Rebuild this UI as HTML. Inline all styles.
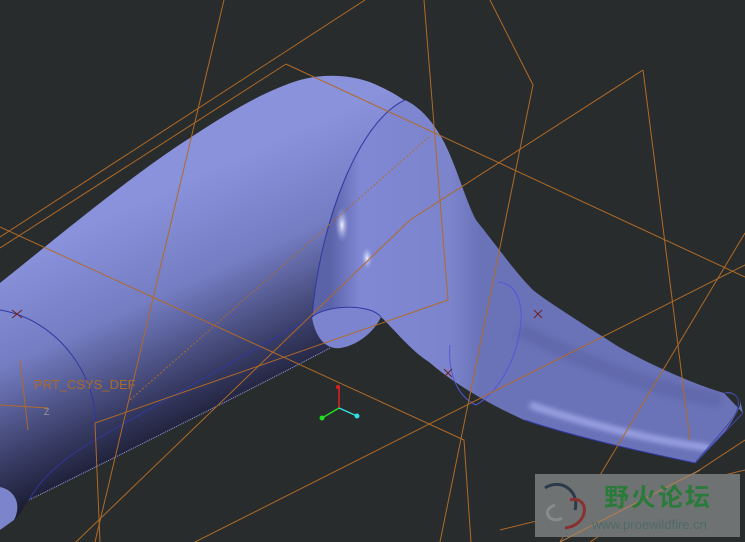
<!DOCTYPE html>
<html><head><meta charset="utf-8"><style>
html,body{margin:0;padding:0;background:#282c2c;width:745px;height:542px;overflow:hidden}
svg{display:block}
</style></head><body>
<svg width="745" height="542" viewBox="0 0 745 542" xmlns="http://www.w3.org/2000/svg">
<defs>
<linearGradient id="g" x1="140" y1="200" x2="240" y2="420" gradientUnits="userSpaceOnUse">
<stop offset="0" stop-color="#8a92dc"/><stop offset="0.4" stop-color="#747cc2"/><stop offset="0.75" stop-color="#3a3e68"/><stop offset="1" stop-color="#16182a"/>
</linearGradient>
<linearGradient id="n" x1="330" y1="200" x2="480" y2="200" gradientUnits="userSpaceOnUse">
<stop offset="0" stop-color="#5a62a8"/><stop offset="0.2" stop-color="#8088d4"/><stop offset="0.8" stop-color="#7c84cc"/><stop offset="1" stop-color="#6a72b8"/>
</linearGradient>
<radialGradient id="h" cx="0" cy="0" r="1" gradientTransform="translate(342 225) scale(7 18)" gradientUnits="userSpaceOnUse">
<stop offset="0" stop-color="#f0f2ff"/><stop offset="1" stop-color="#9098e0" stop-opacity="0"/>
</radialGradient>
<radialGradient id="h2" cx="0" cy="0" r="1" gradientTransform="translate(367 258) scale(6 12)" gradientUnits="userSpaceOnUse">
<stop offset="0" stop-color="#e8ecff"/><stop offset="1" stop-color="#9098e0" stop-opacity="0"/>
</radialGradient>
<filter id="b" x="-10%" y="-50%" width="120%" height="200%"><feGaussianBlur stdDeviation="3"/></filter>
<clipPath id="c"><path d="M405,100 C360,120 320,220 312,317 L381,317 C395,330 410,350 429,362 C450,380 480,400 524,420 C570,435 619,447 695,463 L743,413 L740,400 C735,392 728,391 724,393 C700,386 660,370 619,347 C580,322 545,300 533,290 C515,272 500,250 476,220 C465,200 455,160 440,135 C430,118 418,106 405,100 Z"/></clipPath>
</defs>
<rect width="745" height="542" fill="#282c2c"/>
<path d="M0,283 C60,235 120,185 176,147 C220,118 260,92 300,80 C330,72 360,76 381,87 C405,98 425,115 440,135 C455,160 465,200 476,220 L400,330 L381,317 L330,348 C250,390 150,440 29,500 C25,505 20,515 14,520 L0,530 Z" fill="url(#g)"/>
<path d="M405,100 C360,120 320,220 312,317 L381,317 C395,330 410,350 429,362 C450,380 480,400 524,420 C570,435 619,447 695,463 L743,413 L740,400 C735,392 728,391 724,393 C700,386 660,370 619,347 C580,322 545,300 533,290 C515,272 500,250 476,220 C465,200 455,160 440,135 C430,118 418,106 405,100 Z" fill="url(#n)"/>
<g clip-path="url(#c)">
<path d="M530,405 C590,425 650,440 710,448" fill="none" stroke="#b4baf8" stroke-width="6" filter="url(#b)" opacity="0.8"/>
<path d="M520,330 C580,360 650,390 720,400" fill="none" stroke="#5a60a0" stroke-width="14" filter="url(#b)" opacity="0.5"/>
</g>
<path d="M724,393 C735,392 742,398 740,405 C735,420 720,440 695,463 L743,413 Z" fill="#282c2c"/>
<path d="M724,393 C738,392 742,400 735,415 C725,430 705,450 695,463" fill="none" stroke="#4048a8"/>
<line x1="743" y1="413" x2="695" y2="463" stroke="#4048a8"/>
<path d="M524,420 C570,435 619,447 695,463" fill="none" stroke="#3038a0"/>
<ellipse cx="342" cy="225" rx="7" ry="18" fill="url(#h)"/>
<ellipse cx="367" cy="258" rx="6" ry="12" fill="url(#h2)"/>
<path d="M312,317 C320,305 370,303 381,317 C370,340 345,350 334,348 C320,345 314,330 312,317 Z" fill="#7c84d0"/>
<path d="M312,317 C325,305 370,303 381,317" fill="none" stroke="#3038a0"/>
<path d="M0,487 C15,490 22,505 14,520 L0,530 Z" fill="#7c84cc"/>
<path d="M405,100 C360,120 320,220 312,317" fill="none" stroke="#3038a0" stroke-width="1"/>
<path d="M0,310 C60,320 100,380 95,430" fill="none" stroke="#3038a0"/>
<path d="M330,348 C250,390 150,440 29,500" fill="none" stroke="#9aa0e0" stroke-dasharray="1 1"/>
<path d="M312,317 L95,440 C60,460 40,480 29,500" fill="none" stroke="#3038a0"/>
<path d="M498,282 C540,285 520,380 476,405 C455,395 448,370 450,345" fill="none" stroke="#5058d8"/>
<g stroke="#b06a28" stroke-width="1" fill="none">
<line x1="0" y1="237" x2="365" y2="0"/>
<line x1="0" y1="248" x2="286" y2="64"/>
<line x1="286" y1="64" x2="745" y2="277"/>
<polyline points="0,227 464,440 471,542"/>
<line x1="224" y1="0" x2="95" y2="542"/>
<polyline points="424,0 448,300 95,423 100,542"/>
<polyline points="490,0 533,85 440,542"/>
<polyline points="643,70 690,440"/>
<polyline points="643,70 410,220 76,542"/>
<line x1="745" y1="233" x2="560" y2="542"/>
<line x1="429" y1="137" x2="130" y2="400" stroke-dasharray="2 2"/>
<line x1="195" y1="542" x2="745" y2="265"/>
<line x1="500" y1="530" x2="745" y2="470"/>
<line x1="745" y1="440" x2="590" y2="542"/>
<line x1="20" y1="360" x2="28" y2="430"/>
<line x1="0" y1="405" x2="48" y2="408"/>
</g>
<text x="34" y="389" font-family="Liberation Sans,sans-serif" font-size="13" fill="#a86a2c">PRT_CSYS_DEF</text>
<text x="44" y="415" font-family="Liberation Sans,sans-serif" font-size="9" fill="#999">Z</text>
<g stroke="#702020"><line x1="12" y1="310" x2="22" y2="318"/><line x1="22" y1="310" x2="12" y2="318"/>
<line x1="534" y1="310" x2="542" y2="318"/><line x1="542" y1="310" x2="534" y2="318"/>
<line x1="444" y1="369" x2="452" y2="377"/><line x1="452" y1="369" x2="444" y2="377"/></g>
<line x1="339" y1="387" x2="339" y2="408" stroke="#e02020" stroke-width="1.5"/>
<line x1="339" y1="408" x2="322" y2="418" stroke="#20e020" stroke-width="1.5"/>
<line x1="339" y1="408" x2="357" y2="416" stroke="#30e0e0" stroke-width="1.5"/>
<circle cx="338" cy="387" r="2" fill="#e02020"/><circle cx="322" cy="418" r="2.5" fill="#20e020"/><circle cx="357" cy="416" r="2.5" fill="#30e0e0"/>
<rect x="535" y="474" width="205" height="63" fill="#6f7272"/>
<path d="M545,488 C560,478 580,490 575,510" fill="none" stroke="#2a3a4a" stroke-width="3"/>
<path d="M570,500 C590,495 590,525 565,528" fill="none" stroke="#8a3030" stroke-width="3"/>
<path d="M555,505 C540,510 550,525 562,518" fill="none" stroke="#8a8a8a" stroke-width="3"/>
<line x1="560" y1="542" x2="700" y2="470" stroke="#b08050" stroke-width="1"/>
<text x="604" y="506" font-family="Noto Sans CJK SC,sans-serif" font-weight="bold" font-size="25" fill="#2a7a3a" letter-spacing="2">野火论坛</text>
<text x="592" y="529" font-family="Liberation Sans,sans-serif" font-size="13" fill="#4e6a66">www.proewildfire.cn</text>
</svg>
</body></html>
